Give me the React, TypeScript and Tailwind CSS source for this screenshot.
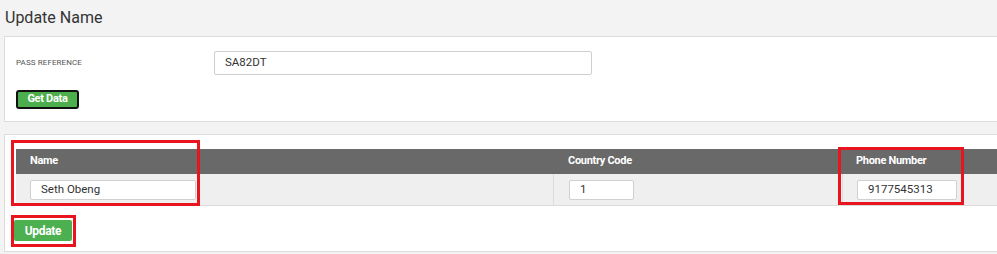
import React from "react";

export default function App() {
  return (
    <div
      className="relative w-[997px] h-[254px] overflow-hidden bg-[#f3f3f3]"
      style={{ fontFamily: "Roboto, 'Liberation Sans', sans-serif" }}
    >
      <div className="pl-[5px] pt-[6px] h-[36px] text-[16px] leading-[24px] text-[#333]">Update Name</div>

      {/* Panel 1 */}
      <div className="ml-[4px] w-[1010px] h-[86px] bg-white border border-[#dcdcdc] pl-[11px] pt-[14px]">
        <div className="flex items-center h-[24px]">
          <div className="w-[198px] text-[8px] leading-[10px] text-[#555] tracking-[0.1px]">PASS REFERENCE</div>
          <div className="w-[378px] h-[24px] border border-[#cfcfcf] rounded-[2px] flex items-center pl-[10px] text-[11.5px] text-[#333]">
            SA82DT
          </div>
        </div>
        <div className="mt-[15px] w-[63px] h-[19px] rounded-[3px] border-2 border-[#111] bg-[#4cae4c] flex items-center justify-center text-[11px] font-bold text-white tracking-[-0.3px]">
          Get Data
        </div>
      </div>

      {/* Panel 2 */}
      <div className="mt-[12px] ml-[4px] w-[1010px] h-[118px] bg-white border border-[#dcdcdc] pl-[11px] pt-[14px]">
        <div className="w-[1200px]">
          <div className="flex h-[25px] bg-[#696969] text-white text-[11px] font-bold items-center tracking-[-0.3px]">
            <div className="w-[537px] pl-[14px]">Name</div>
            <div className="w-[289px] pl-[15px]">Country Code</div>
            <div className="flex-1 pl-[14px]">Phone Number</div>
          </div>
          <div className="flex h-[32px] bg-[#efefef] border-b border-[#dcdcdc]">
            <div className="w-[537px] pl-[14px] flex items-center">
              <div className="w-[166px] h-[20px] bg-white border border-[#d0d0d0] rounded-[2px] pl-[10px] flex items-center text-[11.5px] text-[#333]">Seth Obeng</div>
            </div>
            <div className="w-[289px] pl-[15px] flex items-center border-l border-[#dcdcdc]">
              <div className="w-[65px] h-[20px] bg-white border border-[#d0d0d0] rounded-[2px] pl-[10px] flex items-center text-[11.5px] text-[#333]">1</div>
            </div>
            <div className="flex-1 pl-[14px] flex items-center border-l border-[#dcdcdc]">
              <div className="w-[100px] h-[20px] bg-white border border-[#d0d0d0] rounded-[2px] pl-[10px] flex items-center text-[11.5px] text-[#333]">9177545313</div>
            </div>
          </div>
        </div>
        <div className="mt-[14px] -ml-[2px] w-[58px] h-[21px] rounded-[2px] bg-[#4caf50] flex items-center justify-center text-[12px] font-bold text-white tracking-[-0.3px]">
          Update
        </div>
      </div>

      {/* Red annotation boxes */}
      <div className="absolute left-[11px] top-[140px] w-[189px] h-[66px] border-[3px] border-[#e8141e]" />
      <div className="absolute left-[838px] top-[147px] w-[126px] h-[58px] border-[3px] border-[#e8141e]" />
      <div className="absolute left-[11px] top-[215px] w-[65px] h-[32px] border-[3px] border-[#e8141e]" />
    </div>
  );
}
